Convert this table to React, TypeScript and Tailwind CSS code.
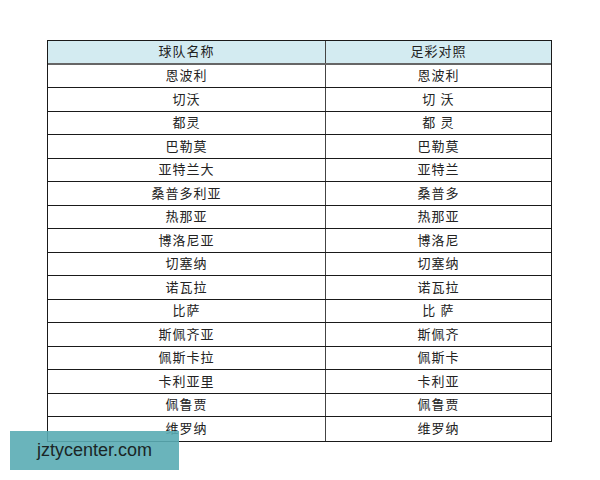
const rows: [string, string][] = [
  ["恩波利", "恩波利"],
  ["切沃", "切 沃"],
  ["都灵", "都 灵"],
  ["巴勒莫", "巴勒莫"],
  ["亚特兰大", "亚特兰"],
  ["桑普多利亚", "桑普多"],
  ["热那亚", "热那亚"],
  ["博洛尼亚", "博洛尼"],
  ["切塞纳", "切塞纳"],
  ["诺瓦拉", "诺瓦拉"],
  ["比萨", "比 萨"],
  ["斯佩齐亚", "斯佩齐"],
  ["佩斯卡拉", "佩斯卡"],
  ["卡利亚里", "卡利亚"],
  ["佩鲁贾", "佩鲁贾"],
  ["维罗纳", "维罗纳"],
];

export default function App() {
  return (
    <div className="relative w-[600px] h-[480px] bg-white overflow-hidden [font-family:'Liberation_Serif','Noto_Sans_CJK_SC',serif] text-[13px] text-[#222]">
      <div className="ml-[47px] mt-[40px] w-[505px] border border-[#1a1a1a]">
        <div className="grid grid-cols-[278px_1fr] h-[23.5px] bg-[#d3ebf1] border-b-2 border-[#666]">
          <div className="flex items-center justify-center border-r border-[#444] tracking-[1px]">球队名称</div>
          <div className="flex items-center justify-center tracking-[1px]">足彩对照</div>
        </div>
        {rows.map(([a, b], i) => (
          <div
            key={i}
            className={
              "grid grid-cols-[278px_1fr] h-[23.5px] " +
              (i < rows.length - 1 ? "border-b border-[#1a1a1a]" : "")
            }
          >
            <div className="flex items-center justify-center border-r border-[#444] tracking-[1px]">{a}</div>
            <div className="flex items-center justify-center tracking-[1px] whitespace-pre">{b}</div>
          </div>
        ))}
      </div>
      <div className="absolute left-[10px] top-[431px] w-[169px] h-[39px] bg-[#5aacb4]/90 flex items-center pl-[27px] [font-family:'Liberation_Sans',sans-serif] text-[18px] text-[#1b2626]">
        jztycenter.com
      </div>
    </div>
  );
}
